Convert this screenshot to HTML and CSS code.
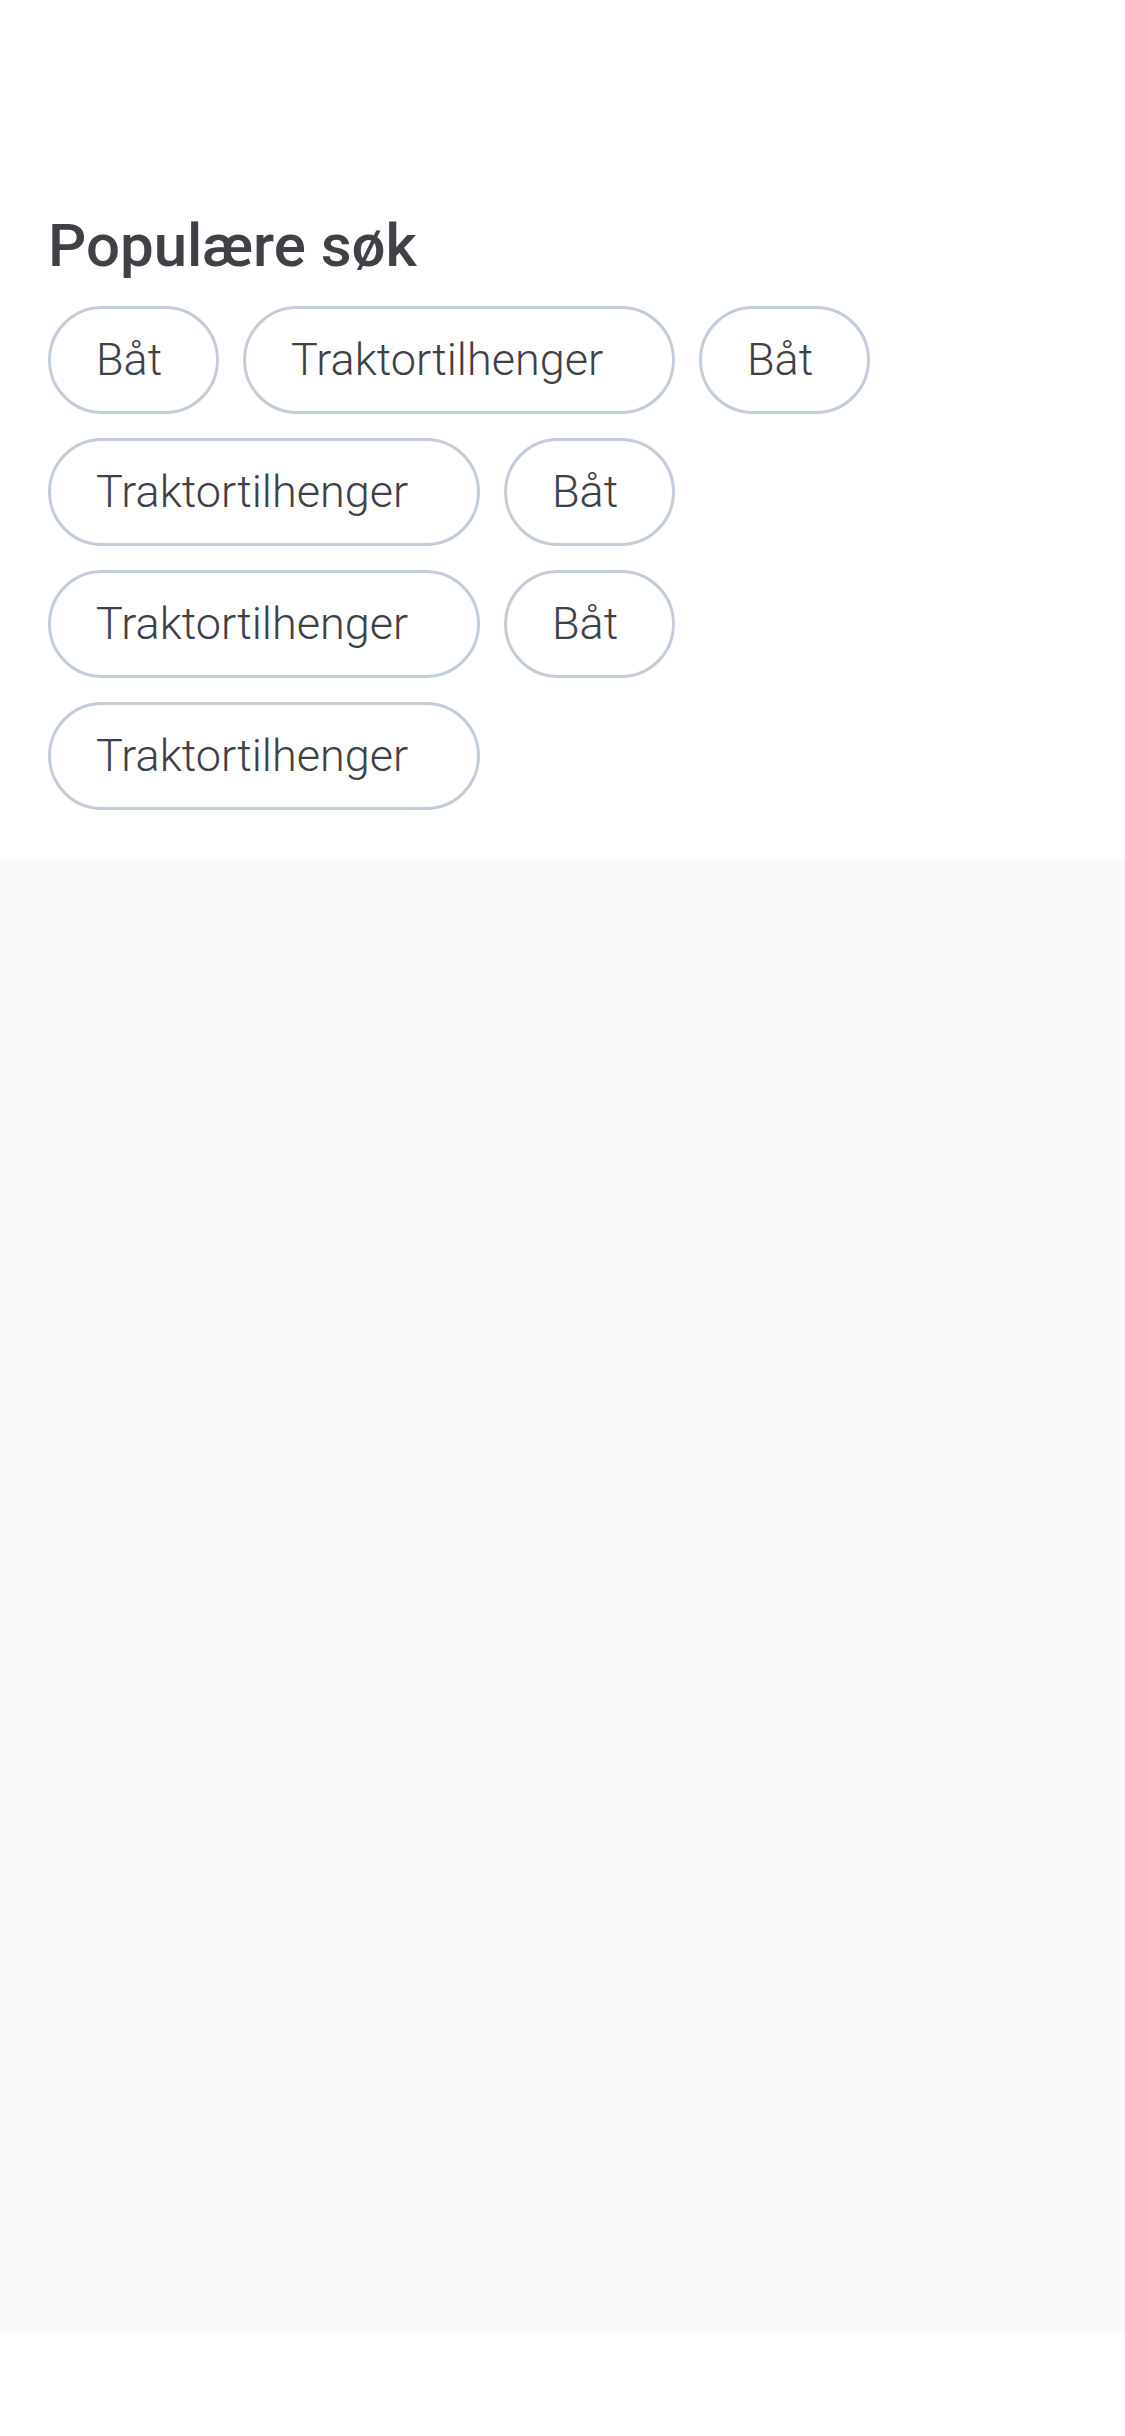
FILE: index.html
```html
<!DOCTYPE html>
<html lang="nb">
<head>
<meta charset="utf-8">
<meta name="viewport" content="width=device-width, initial-scale=1">
<title>Populære søk</title>
<link rel="stylesheet" href="styles.css">
</head>
<body>
<main class="screen">
<section class="popular">
<h1 class="title">Populære søk</h1>
<div class="pills">
<button class="pill" type="button">Båt</button>
<button class="pill pill-wide" type="button">Traktortilhenger</button>
<button class="pill" type="button">Båt</button>
<button class="pill pill-wide" type="button">Traktortilhenger</button>
<button class="pill" type="button">Båt</button>
<button class="pill pill-wide" type="button">Traktortilhenger</button>
<button class="pill" type="button">Båt</button>
<button class="pill pill-wide" type="button">Traktortilhenger</button>
</div>
</section>
</main>
</body>
</html>
```
FILE: styles.css
```css
* {
  box-sizing: border-box;
}

body {
  margin: 0;
  background: #fff;
  color: #404047;
  font-family: Roboto, "Liberation Sans", sans-serif;
}

.screen {
  min-height: 100vh;
  padding-bottom: 102px;
  display: flex;
  flex-direction: column;
}

.screen::after {
  content: "";
  flex: 1;
  background: #f8fafc;
}

.popular {
  padding: 210px 48px 48px;
}

.title {
  margin: 0 0 24px;
  font-size: 60px;
  line-height: 72px;
  font-weight: 500;
}

.pills {
  display: flex;
  flex-wrap: wrap;
  gap: 24px;
  max-width: 832px;
}

.pill {
  width: 171px;
  height: 108px;
  padding: 0 45px;
  border: 3px solid #c3ccd9;
  border-radius: 54px;
  background: #fff;
  color: inherit;
  font: inherit;
  font-size: 45px;
  font-weight: 300;
  line-height: 60px;
  text-align: left;
  white-space: nowrap;
}

.pill-wide {
  width: 432px;
}
```
